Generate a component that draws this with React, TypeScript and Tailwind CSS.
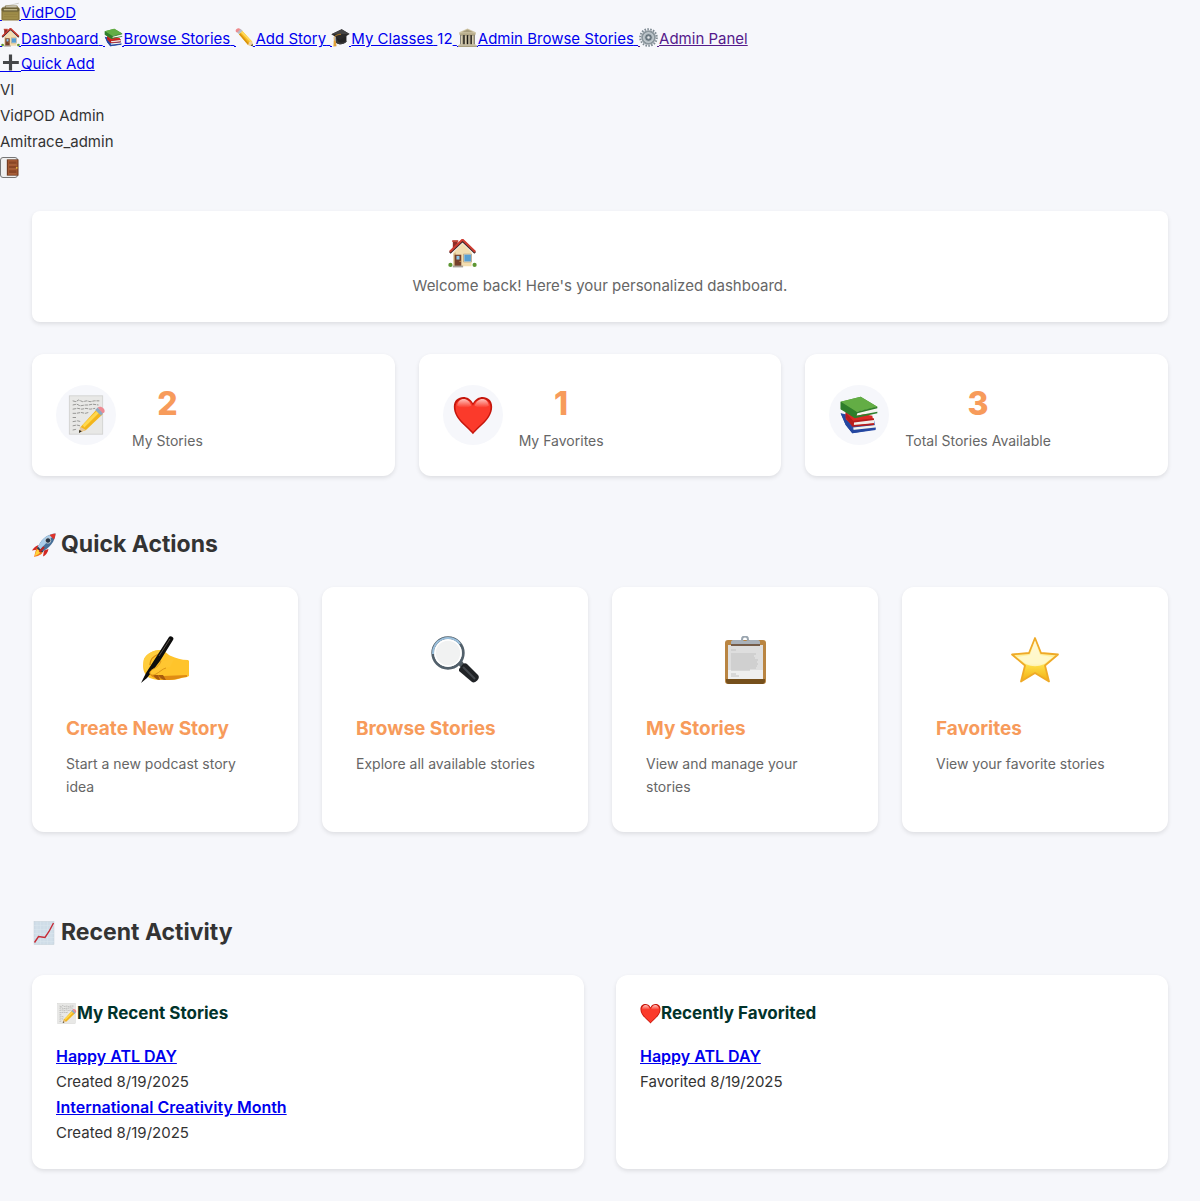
import type { ReactNode } from "react";

type IconName =
  | "radio" | "house" | "books" | "pencil" | "cap" | "bank" | "gear" | "plus" | "door"
  | "memo" | "heart" | "rocket" | "hand" | "magnifier" | "clipboard" | "star" | "chart";

const art: Record<IconName, ReactNode> = {
  radio: (
    <>
      <path d="M6 12L45 3" stroke="#b9b7ae" strokeWidth="1.6" />
      <path d="M11 15v-5h30v5" fill="none" stroke="#8a7c4e" strokeWidth="2.5" />
      <rect x="1" y="14" width="46" height="33" rx="4" fill="#8f7d40" />
      <rect x="2" y="14" width="44" height="10" rx="3" fill="#6d6238" />
      <rect x="7" y="18" width="34" height="3" fill="#cfc394" />
      <rect x="5" y="26" width="38" height="17" rx="2" fill="#a08e4a" />
      <path d="M7 31h34M7 37h34" stroke="#8f7d3e" strokeWidth="1.500" />
    </>
  ),
  house: (
    <>
      <path d="M9 22L24 7l15 15v23H9z" fill="#f2ddb0" />
      <path d="M9 24v21h4V22z" fill="#d9bd88" />
      <path d="M8 3h8v9l-8 8z" fill="#8e2f28" />
      <path d="M7 2h10v3H7z" fill="#c3463a" />
      <path d="M3 23L24 3l21 20" fill="none" stroke="#4a2c2b" strokeWidth="4" />
      <path d="M3 21L24 1l21 20" fill="none" stroke="#cf3d32" strokeWidth="3.400" />
      <rect x="11" y="26" width="11" height="19" fill="#76402b" />
      <rect x="14" y="28" width="5" height="6" fill="#8ec7ea" />
      <circle cx="20" cy="37" r="1" fill="#e7b948" />
      <rect x="26" y="25" width="13" height="13" fill="#e9eef0" stroke="#a28d68" strokeWidth="1" />
      <rect x="27" y="26" width="11" height="11" fill="#579fd2" />
      <rect x="8" y="44" width="17" height="3" fill="#a7a097" />
      <circle cx="4" cy="43" r="3.500" fill="#5d9632" />
      <circle cx="44" cy="43" r="3.500" fill="#5d9632" />
    </>
  ),
  books: (
    <>
      <path d="M2 22l6 14 8 10 28-4-2-12z" fill="#2c4ea8" />
      <path d="M17 39l27-3v4l-26 4z" fill="#f3f3ee" />
      <path d="M2 22l5 3 9 17 28-3v2l-28 5-8-10z" fill="#2547a0" />
      <path d="M8 19l32 6 2 10-25 2-9-8z" fill="#d92925" />
      <path d="M18 32l24-3v5l-24 3z" fill="#f0efea" />
      <path d="M8 21l9 10 25-3v2l-24 3-1 3 25-2v2l-26 2-8-11z" fill="#b61c1c" />
      <path d="M2 8l24-6 20 12-27 11L2 17z" fill="#4e9a32" />
      <path d="M2 8l24-6 20 12-25 6z" fill="#63ad45" />
      <path d="M21 20l25-5-1 5-24 5z" fill="#f4f4ef" />
      <path d="M2 8l19 12 25-6v2l-24 6-1 3 25-5v2l-27 6L2 17z" fill="#2f7d2b" />
    </>
  ),
  pencil: (
    <>
      <path d="M10 16l8-9 25 27 2 12-12-3z" fill="#f5b921" />
      <path d="M14 11l4-4 25 27-4 2z" fill="#ffd95a" />
      <path d="M10 16l3-3 24 28-4 2z" fill="#d9930f" />
      <path d="M33 43l3-8 7-1 2 12z" fill="#efd2a0" />
      <path d="M40 45l4-5 1 6z" fill="#333" />
      <path d="M5 11l9-9 5 5-9 9z" fill="#b6bec5" />
      <path d="M2 8c-2-5 5-9 9-7l3 2-9 9z" fill="#ee8b8d" />
    </>
  ),
  cap: (
    <>
      <path d="M12 22v14c6 7 20 7 27-1V20z" fill="#252525" />
      <path d="M12 23v13c6 7 20 7 27-1v-3c-7 6-17 7-22 1z" fill="#3b3b3b" />
      <path d="M1 16L27 3l20 12-24 15z" fill="#2b2b2b" />
      <path d="M1 16L27 3l20 12z" fill="#444" />
      <path d="M25 16c-8 0-17 4-17 9l1 13" fill="none" stroke="#d9962b" strokeWidth="2.200" />
      <path d="M7 32h5l2 14-8 1z" fill="#e0a038" />
    </>
  ),
  bank: (
    <>
      <path d="M3 11L24 1l21 10v4H3z" fill="#cfc5a5" />
      <path d="M9 11l15-7 15 7z" fill="#a89d7c" />
      <rect x="6" y="15" width="36" height="28" fill="#1d1a15" />
      <rect x="4" y="14" width="40" height="4" fill="#b3a885" />
      <path d="M7 18h6v24H7zM17 18h5v24h-5zM26 18h5v24h-5zM35 18h6v24h-6z" fill="#d8cfb2" />
      <path d="M11 18h2v24h-2zM20 18h2v24h-2zM29 18h2v24h-2zM39 18h2v24h-2z" fill="#a0957a" />
      <rect x="3" y="41" width="42" height="3" fill="#d2c8a9" />
      <rect x="0" y="44" width="48" height="4" fill="#aaa07e" />
    </>
  ),
  gear: (
    <>
      <circle cx="24" cy="24" r="21" fill="none" stroke="#7f8b93" strokeWidth="5" strokeDasharray="4 3.330" />
      <circle cx="24" cy="24" r="16" fill="#c3cbd0" stroke="#8b969d" strokeWidth="5" />
      <circle cx="24" cy="24" r="12" fill="#aab4bb" stroke="#cfd6da" strokeWidth="1.500" />
      <circle cx="24" cy="24" r="7" fill="#7c8991" stroke="#4e5b64" strokeWidth="2" />
      <circle cx="24" cy="24" r="3" fill="#e4e7e9" />
    </>
  ),
  plus: <path d="M20 4h8v16h17v8H28v16h-8V28H5v-8h15z" fill="#444649" />,
  door: (
    <>
      <rect x="8" y="1" width="33" height="46" fill="#6e3a20" />
      <rect x="11" y="3" width="27" height="42" fill="#a65a33" />
      <path d="M14 7h21v9H14zM14 20h21v8H14zM14 32h21v10H14z" fill="#8a4626" />
      <path d="M14 15h21M14 27h21M14 41h21" stroke="#c17a50" strokeWidth="1.500" />
      <circle cx="36" cy="25" r="2.500" fill="#f0c141" />
    </>
  ),
  memo: (
    <>
      <rect x="4" y="1" width="40" height="46" fill="#e8e8e6" stroke="#d0d0ce" strokeWidth="1" />
      <path d="M8 7l4 1 3-2 5 2 5-1 4 1 5-1 6 0M8 12l5-1 4 2 6-1 4 0 5-1 7 1M8 17l6-1 5 1 5-1 5 1 6-1M8 22l4 0 6-1 5 1 4-1M8 27l5 0M8 32l6-1 4 1M8 37l5-1 4 1M8 42l5-1" fill="none" stroke="#8f8f8d" strokeWidth="1.100" strokeDasharray="4 1" />
      <path d="M17 39L37 17l7 6-20 19-8 3z" fill="#f3b51b" />
      <path d="M20 36l18-18 3 2-19 19z" fill="#ffd84d" />
      <path d="M17 38l7 4-8 3z" fill="#e6c79b" />
      <path d="M16 42l3 1.500-3.500 2z" fill="#222" />
      <path d="M35 18l3-3 7 6-3 4z" fill="#8fa9c0" />
      <path d="M38 15c3-3 10 1 8 6l-2 1z" fill="#ee8a93" />
    </>
  ),
  heart: (
    <>
      <defs>
        <linearGradient id="heartShine" x1="0" y1="0" x2="0" y2="1">
          <stop offset="0" stopColor="#ffc2bb" />
          <stop offset="1" stopColor="#fb3a2b" />
        </linearGradient>
      </defs>
      <path d="M24 47C17 38 1 29 1 14 1 1 18-2 24 10 30-2 47 1 47 14c0 15-16 24-23 33z" fill="#c5160c" />
      <path d="M24 44.500C17 36 3 28 3 15 3 3 19 1 24 13 29 1 45 3 45 15c0 13-14 21-21 29.500z" fill="#fb3a2b" />
      <path d="M5 13C6 3 18 1 22 13c-4 3-13 3-17 0zM26 13C30 1 42 3 43 13c-4 3-13 3-17 0z" fill="url(#heartShine)" />
    </>
  ),
  rocket: (
    <>
      <path d="M13 24C5 27 2 32 0 35l12-2zM24 35l-2 12c5-2 10-8 11-15z" fill="#d32822" />
      <path d="M10 29l11 9c0 5-9 8-17 10 2-4 1-8 6-19z" fill="#f5781e" />
      <path d="M11 33l6 5c-1 3-7 6-12 8 2-4 2-9 6-13z" fill="#ffd53c" />
      <path d="M11 29C18 15 27 3 47 1c-1 17-12 28-27 37z" fill="#466f98" />
      <path d="M11 29C18 15 27 3 47 1L16 33z" fill="#a9cde9" />
      <path d="M35 4c4-2 8-3 12-3 0 4-1 8-3 12z" fill="#df332a" />
      <path d="M11 29c3-4 5 8 12 7l-3 3-10-8z" fill="#2d3748" />
      <circle cx="32" cy="15" r="5.500" fill="#283747" stroke="#dbe5ec" strokeWidth="1.500" />
      <path d="M15 38l9-10" stroke="#be251f" strokeWidth="4" />
    </>
  ),
  hand: (
    <>
      <path d="M3 23C5 18 13 14 19 14c5 0 8 5 11 6 5 2 10 4 17 4l1 1v15l-2 1c-5 0-9 3-15 3-8 0-22 1-26-5-4-5-3-11-2-16z" fill="#ffc42b" />
      <path d="M8 37c8 5 24 2 38 2v2c-6 0-10 3-18 3-9 0-17-1-20-7z" fill="#e08c13" />
      <path d="M12 39c2 3 4 5 7 5l-2-5c2 3 5 5 8 5l-3-5z" fill="#a85b0e" />
      <path d="M3 23C6 17 13 14 19 14l-1 4c-6 1-10 6-10 12l-1 6c-5-3-5-9-4-13z" fill="#ffcd3d" />
      <path d="M18 18c-6 2-9 6-9 11" fill="none" stroke="#d48a12" strokeWidth="1.300" />
      <path d="M5 37L28 1c1-2 6 0 4 3L19 25 6 42l-6 5z" fill="#0c0c0c" />
      <path d="M18 20L29 3" stroke="#5a504b" strokeWidth="1" />
      <path d="M20 25c-3 8-9 7-11 11-1 3 3 4 6 2 5-3 8-7 14-7l4-8z" fill="#ffc631" />
      <path d="M20 25c-3 8-9 7-11 11-1 3 3 4 6 2 4-2 6-5 10-6" fill="none" stroke="#dc9418" strokeWidth="1" />
    </>
  ),
  magnifier: (
    <>
      <path d="M27 28l4-3 3 4-4 3z" fill="#515b62" />
      <path d="M28 33l4-5c1-1 3-1 4 0l11 11c3 3-3 9-6 7L28 35z" fill="#202326" />
      <path d="M32 31l12 12" stroke="#44494e" strokeWidth="2" />
      <circle cx="17" cy="17" r="15.300" fill="#f1f2f2" stroke="#52606b" strokeWidth="2.800" />
      <path d="M2 18a15 15 0 0 1 27-10" fill="none" stroke="#9cc0dc" strokeWidth="2" />
      <circle cx="17" cy="17" r="13" fill="none" stroke="#fff" strokeWidth="1.500" />
    </>
  ),
  clipboard: (
    <>
      <rect x="4" y="4" width="41" height="44" rx="3" fill="#b98542" />
      <path d="M5 43h39v2c0 2-1 3-3 3H8c-2 0-3-1-3-3z" fill="#76501c" />
      <rect x="7" y="9" width="35" height="34" fill="#dedede" />
      <path d="M7 34h35v9H7z" fill="#efefef" />
      <path d="M10 14h5M10 18h25M10 20h23M10 22h24M10 24h27M10 26h26M10 28h27M10 30h26M10 32h25M10 34h19M10 38h5M10 40h8" stroke="#c2c2c2" strokeWidth="1" />
      <circle cx="24" cy="3.500" r="3" fill="none" stroke="#9aa5af" strokeWidth="2" />
      <path d="M10 9V6c0-1 1-2 2-2h8l3 1h3l3-1h8c1 0 2 1 2 2v3z" fill="#a9b1ba" />
      <path d="M10 8h29v2H10z" fill="#755c49" />
    </>
  ),
  star: (
    <>
      <defs>
        <linearGradient id="starFill" x1="0" y1="0" x2="0" y2="1">
          <stop offset="0" stopColor="#fff3c0" />
          <stop offset=".58" stopColor="#fff08c" />
          <stop offset=".64" stopColor="#fddc45" />
          <stop offset="1" stopColor="#f2ae12" />
        </linearGradient>
      </defs>
      <path d="M24 2l6 15 17 1.500-13 11 4 16L24 37 10 45.500l4-16-13-11L18 17z" fill="url(#starFill)" stroke="#efaa27" strokeWidth="1.800" strokeLinejoin="round" />
      <path d="M24 5l5 14 13 2-9 7c-6 3-12 3-18 0l-9-7 13-2z" fill="#fffbe0" opacity=".7" />
    </>
  ),
  chart: (
    <>
      <rect x="4" y="1" width="40" height="46" fill="#cfdde8" stroke="#c2cdd5" strokeWidth="1" />
      <path d="M10 1v46M17 1v46M24 1v46M31 1v46M38 1v46M4 9h40M4 17h40M4 25h40M4 33h40M4 41h40" stroke="#dbe6ee" strokeWidth="1" />
      <path d="M5 43l8-12 13 2 8-12 9-17" fill="none" stroke="#c62a35" strokeWidth="2.800" />
    </>
  ),
};

function Icon({ name, className }: { name: IconName; className: string }) {
  return (
    <svg viewBox="0 0 48 48" aria-hidden="true" className={className}>
      {art[name]}
    </svg>
  );
}

/* Icon inside a running text link; the underline shows at both of its sides. */
function LinkIcon({ name, wide = false }: { name: IconName; wide?: boolean }) {
  return (
    <svg viewBox="0 0 21 21" aria-hidden="true" className="inline-block size-[21px] align-[-5px]">
      <path d={wide ? "M0 18.500h21" : "M0 18.500h2M19 18.500h2"} stroke="currentColor" strokeWidth="1" />
      <svg x="1" y="0" width="19" height="19" viewBox="0 0 48 48">
        {art[name]}
      </svg>
    </svg>
  );
}

const navLinks: { icon: IconName; label: string; visited?: boolean; count?: number }[] = [
  { icon: "house", label: "Dashboard" },
  { icon: "books", label: "Browse Stories" },
  { icon: "pencil", label: "Add Story" },
  { icon: "cap", label: "My Classes", count: 12 },
  { icon: "bank", label: "Admin Browse Stories" },
  { icon: "gear", label: "Admin Panel", visited: true },
];

const stats: { icon: IconName; value: number; label: string }[] = [
  { icon: "memo", value: 2, label: "My Stories" },
  { icon: "heart", value: 1, label: "My Favorites" },
  { icon: "books", value: 3, label: "Total Stories Available" },
];

const actions: { icon: IconName; title: string; text: string }[] = [
  { icon: "hand", title: "Create New Story", text: "Start a new podcast story idea" },
  { icon: "magnifier", title: "Browse Stories", text: "Explore all available stories" },
  { icon: "clipboard", title: "My Stories", text: "View and manage your stories" },
  { icon: "star", title: "Favorites", text: "View your favorite stories" },
];

const activity: { icon: IconName; title: string; items: { title: string; date: string }[] }[] = [
  {
    icon: "memo",
    title: "My Recent Stories",
    items: [
      { title: "Happy ATL DAY", date: "Created 8/19/2025" },
      { title: "International Creativity Month", date: "Created 8/19/2025" },
    ],
  },
  { icon: "heart", title: "Recently Favorited", items: [{ title: "Happy ATL DAY", date: "Favorited 8/19/2025" }] },
];

function SectionTitle({ icon, children }: { icon: IconName; children: ReactNode }) {
  return (
    <h2 className="mb-6 flex items-center gap-[5px] pt-0.5 text-[23px] leading-[37px] font-bold">
      <Icon name={icon} className="size-6" />
      {children}
    </h2>
  );
}

export default function App() {
  return (
    <div className="min-h-screen bg-[#f6f7fb] font-['Inter',sans-serif] text-[15px] leading-[26px] text-[#333]">
      <header>
        <div>
          <a href="#home" className="text-[#0000ee] underline">
            <LinkIcon name="radio" />
            VidPOD
          </a>
        </div>
        <nav className="leading-[25px]">
          {navLinks.map((l) => (
            <a key={l.label} href="#nav" className={l.visited ? "text-[#551a8b] underline" : "text-[#0000ee] underline"}>
              <LinkIcon name={l.icon} />
              {l.label}{" "}
              {l.count && (
                <>
                  <span className="inline-block">{l.count}</span>{" "}
                </>
              )}
            </a>
          ))}
        </nav>
        <div>
          <a href="#add" className="text-[#0000ee] underline">
            <LinkIcon name="plus" wide />
            Quick Add
          </a>
        </div>
        <div>VI</div>
        <div>VidPOD Admin</div>
        <div>Amitrace_admin</div>
        <div className="flex h-6 items-center">
          <button aria-label="Log out" className="flex h-[21px] w-[18px] items-center justify-end rounded-[3px] border border-[#767676] bg-[#efefef]">
            <Icon name="door" className="-mr-1 size-[17px] shrink-0" />
          </button>
        </div>
      </header>

      <main className="p-8">
        <section className="flex justify-center rounded-lg bg-white p-6 shadow-[0_2px_4px_rgba(0,0,0,0.1)]">
          <div>
            <h1 aria-label="Dashboard" className="mb-0.5 flex h-9 items-center pl-[35px]">
              <Icon name="house" className="size-[29px]" />
            </h1>
            <p className="leading-[25px] text-[#666]">Welcome back! Here's your personalized dashboard.</p>
          </div>
        </section>

        <section aria-label="Statistics" className="mt-8 grid grid-cols-3 gap-6">
          {stats.map((s) => (
            <div key={s.label} className="flex items-center gap-4 rounded-xl bg-white p-6 shadow-[0_2px_4px_rgba(0,0,0,0.1)]">
              <div className="flex size-[60px] items-center justify-center rounded-full bg-[#f6f7fb]">
                <Icon name={s.icon} className="size-10" />
              </div>
              <div className="text-center">
                <div className="text-[32px] leading-[51px] font-extrabold text-[#f79b5b]">{s.value}</div>
                <div className="text-sm leading-[23px] text-[#666]">{s.label}</div>
              </div>
            </div>
          ))}
        </section>

        <section className="mt-12">
          <SectionTitle icon="rocket">Quick Actions</SectionTitle>
          <div className="grid grid-cols-4 gap-6">
            {actions.map((a) => (
              <a key={a.title} href="#action" className="block rounded-xl border-2 border-white bg-white p-8 shadow-[0_2px_4px_rgba(0,0,0,0.1)]">
                <div className="mb-4 flex h-[77px] items-center justify-center">
                  <Icon name={a.icon} className="size-12" />
                </div>
                <h3 className="mb-2 text-[19px] leading-[30px] font-bold text-[#f79b5b]">{a.title}</h3>
                <p className="text-sm leading-[23px] text-[#666]">{a.text}</p>
              </a>
            ))}
          </div>
        </section>

        <section className="mt-20">
          <SectionTitle icon="chart">Recent Activity</SectionTitle>
          <div className="grid grid-cols-2 gap-8">
            {activity.map((c) => (
              <div key={c.title} className="rounded-xl bg-white p-6 shadow-[0_2px_4px_rgba(0,0,0,0.1)]">
                <h3 className="mb-4 flex items-center text-[17px] leading-7 font-bold text-[#01332b]">
                  <Icon name={c.icon} className="size-[21px]" />
                  {c.title}
                </h3>
                {c.items.map((i) => (
                  <div key={i.title}>
                    <a href="#story" className="block w-fit text-base leading-[26px] font-semibold text-[#0000ee] underline">{i.title}</a>
                    <div className="leading-[25px]">{i.date}</div>
                  </div>
                ))}
              </div>
            ))}
          </div>
        </section>
      </main>
    </div>
  );
}
